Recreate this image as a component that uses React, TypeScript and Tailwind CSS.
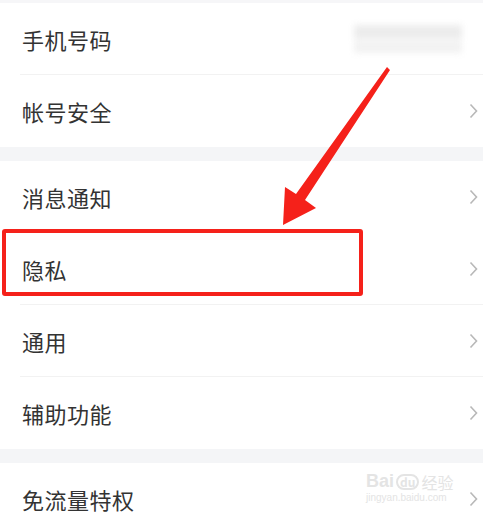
import React from "react";

const Chevron = () => (
  <svg width="9" height="16" viewBox="0 0 9 16" className="shrink-0">
    <path d="M1.5 1.5 L7.5 8 L1.5 14.5" fill="none" stroke="#b8b8b8" strokeWidth="1.6" />
  </svg>
);

const Row = ({
  label,
  chevron = true,
  line = false,
  children,
}: {
  label: string;
  chevron?: boolean;
  line?: boolean;
  children?: React.ReactNode;
}) => (
  <div className="relative flex items-center justify-between h-[72px] pl-[22px] pr-[5px] bg-white">
    <span className="text-[22px] leading-none text-[#333333] tracking-[0.5px]">{label}</span>
    {children}
    {chevron && <Chevron />}
    {line && <div className="absolute left-[20px] right-0 bottom-0 h-px bg-[#f2f2f2]" />}
  </div>
);

const Gap = () => <div className="h-[14px] bg-[#f4f5f7]" />;

export default function App() {
  return (
    <div
      className="relative w-[483px] h-[523px] overflow-hidden bg-white"
      style={{ fontFamily: '"Noto Sans CJK SC", "Noto Sans", sans-serif' }}
    >
      <div className="h-[3px] bg-[#f6f6f8]" />
      <Row label="手机号码" chevron={false} line>
        <div className="mr-[16px] flex flex-col gap-[2px] blur-[3px]">
          <div className="w-[108px] h-[14px] bg-[#ececec]" />
          <div className="w-[108px] h-[12px] bg-[#f2f2f2]" />
        </div>
      </Row>
      <Row label="帐号安全" />
      <Gap />
      <Row label="消息通知" />
      <Row label="隐私" line />
      <Row label="通用" line />
      <Row label="辅助功能" />
      <Gap />
      <Row label="免流量特权" />

      {/* highlight box */}
      <div className="absolute left-[2px] top-[229px] w-[361px] h-[67px] border-[4px] border-[#f5211a] rounded-[3px]" />

      {/* arrow */}
      <svg className="absolute inset-0" width="483" height="523">
        <polygon
          points="387,67 390,70 305,200 316,208 283,225 285,187 296,194"
          fill="#f5211a"
        />
      </svg>

      {/* watermark */}
      <div className="absolute left-[366px] top-[472px] flex flex-col items-start text-[#e4e4e4] leading-none">
        <div className="flex items-end gap-[2px]">
          <span className="text-[18px] font-bold" style={{ fontFamily: '"Liberation Sans", sans-serif' }}>Bai</span>
          <span className="text-[12px] font-bold border-2 border-[#e4e4e4] rounded-full px-[2px]">du</span>
          <span className="text-[16px]">经验</span>
        </div>
        <span className="text-[10px] mt-[3px]" style={{ fontFamily: '"Liberation Sans", sans-serif' }}>jingyan.baidu.com</span>
      </div>
    </div>
  );
}
